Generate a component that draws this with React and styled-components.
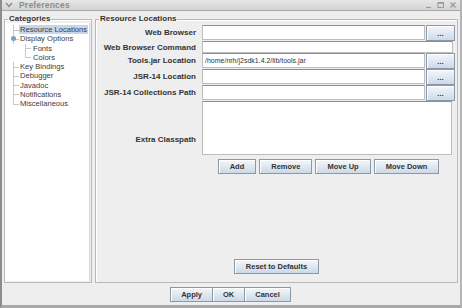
import { createGlobalStyle } from "styled-components";
import styled from "styled-components";

const GlobalStyle = createGlobalStyle`
  html, body {
    margin: 0;
    padding: 0;
    background: #dcdcdc;
  }
  * {
    box-sizing: border-box;
  }
`;

const categories = [
  { name: "Resource Locations", level: 0, selected: true },
  { name: "Display Options", level: 0, expanded: true },
  { name: "Fonts", level: 1 },
  { name: "Colors", level: 1, last: true },
  { name: "Key Bindings", level: 0 },
  { name: "Debugger", level: 0 },
  { name: "Javadoc", level: 0 },
  { name: "Notifications", level: 0 },
  { name: "Miscellaneous", level: 0, last: true },
];

const fields = [
  { label: "Web Browser", value: "", browse: true },
  { label: "Web Browser Command", value: "", browse: false },
  { label: "Tools.jar Location", value: "/home/nrh/j2sdk1.4.2/lib/tools.jar", browse: true },
  { label: "JSR-14 Location", value: "", browse: true },
  { label: "JSR-14 Collections Path", value: "", browse: true },
];

export default function App() {
  return (
    <>
      <GlobalStyle />
      <Window>
        <TitleBar>
          <TitleLeft>
            <svg width="8" height="6" viewBox="0 0 8 6">
              <path d="M1 1 L4 4.5 L7 1" stroke="#8a8a8a" strokeWidth="1.4" fill="none" />
            </svg>
            <span>Preferences</span>
          </TitleLeft>
          <TitleControls>
            <svg width="34" height="8" viewBox="0 0 34 8">
              <path d="M2 6.5 H7" stroke="#9a9a9a" strokeWidth="1.2" />
              <rect x="14" y="1.5" width="5.5" height="5" stroke="#9a9a9a" strokeWidth="1" fill="none" />
              <path d="M14 2 H19.5" stroke="#9a9a9a" strokeWidth="1.5" />
              <path d="M26.5 1.5 L31.5 6.5 M31.5 1.5 L26.5 6.5" stroke="#9a9a9a" strokeWidth="1.4" />
            </svg>
          </TitleControls>
        </TitleBar>
        <Body>
          <Panels>
            <Group $width="88px">
              <Legend>Categories</Legend>
              <Tree>
                {categories.map((c) => (
                  <TreeRow key={c.name} $level={c.level} $last={c.last}>
                    {c.expanded && <Knob />}
                    <TreeLabel $selected={c.selected}>{c.name}</TreeLabel>
                  </TreeRow>
                ))}
              </Tree>
            </Group>
            <Group $flex>
              <Legend>Resource Locations</Legend>
              <Form>
                {fields.map((f) => (
                  <FieldRow key={f.label} $browse={f.browse}>
                    <Label>{f.label}</Label>
                    <TextField $wide={!f.browse}>{f.value}</TextField>
                    {f.browse && <Button $small>...</Button>}
                  </FieldRow>
                ))}
                <ClasspathLabel>Extra Classpath</ClasspathLabel>
                <TextArea />
                <ListButtons>
                  <Button>Add</Button>
                  <Button>Remove</Button>
                  <Button>Move Up</Button>
                  <Button>Move Down</Button>
                </ListButtons>
              </Form>
              <ResetRow>
                <Button>Reset to Defaults</Button>
              </ResetRow>
            </Group>
          </Panels>
          <Footer>
            <Button $joined>Apply</Button>
            <Button $joined>OK</Button>
            <Button $joined>Cancel</Button>
          </Footer>
        </Body>
      </Window>
    </>
  );
}

const Window = styled.div`
  width: 462px;
  height: 308px;
  display: flex;
  flex-direction: column;
  background: #eeeeee;
  border-left: 2px solid #8c8c8c;
  border-right: 2px solid #b4b4b4;
  border-bottom: 3px solid #a8a8a8;
  font-family: "Liberation Sans", Arial, sans-serif;
  color: #333333;
`;

const TitleBar = styled.div`
  height: 11px;
  display: flex;
  align-items: center;
  justify-content: space-between;
  padding: 0 2px 0 3px;
  background: linear-gradient(#e6e6e6, #d4d4d4);
  border-bottom: 1px solid #a9a9a9;
`;

const TitleLeft = styled.div`
  display: flex;
  align-items: center;
  gap: 6px;
  font-size: 8.5px;
  font-weight: bold;
  color: #8d8d8d;
  letter-spacing: 0.2px;
`;

const TitleControls = styled.div`
  display: flex;
  align-items: center;
`;

const Body = styled.div`
  flex: 1;
  display: flex;
  flex-direction: column;
  padding: 4px 2px 0 2px;
`;

const Panels = styled.div`
  flex: 1;
  display: flex;
  gap: 3px;
`;

const Group = styled.fieldset`
  margin: 0;
  padding: 0 1px 1px 1px;
  width: ${(p) => p.$width || "auto"};
  flex: ${(p) => (p.$flex ? 1 : "none")};
  display: flex;
  flex-direction: column;
  border: 1px solid #b9b9b9;
  box-shadow: inset 1px 1px 0 #ffffff;
  min-width: 0;
`;

const Legend = styled.legend`
  padding: 0 1px;
  margin-left: 2px;
  font-size: 8px;
  font-weight: bold;
  color: #333333;
  line-height: 8px;
`;

const Tree = styled.div`
  flex: 1;
  background: #ffffff;
  padding: 2px 0 0 0;
  border-right: 1px solid #d8d8d8;
`;

const TreeRow = styled.div`
  position: relative;
  height: 9.25px;
  display: flex;
  align-items: center;
  padding-left: ${(p) => (p.$level ? 26 : 13)}px;
  font-size: 7.6px;
  white-space: nowrap;
  &::before {
    content: "";
    position: absolute;
    left: ${(p) => (p.$level ? 19 : 7)}px;
    top: 0;
    height: ${(p) => (p.$last ? "50%" : "100%")};
    border-left: 1px solid #c8c8c8;
  }
  &::after {
    content: "";
    position: absolute;
    left: ${(p) => (p.$level ? 19 : 7)}px;
    top: 50%;
    width: 6px;
    border-top: 1px solid #c8c8c8;
  }
`;

const Knob = styled.span`
  position: absolute;
  left: 5px;
  top: 2px;
  width: 5px;
  height: 5px;
  border-radius: 50%;
  background: #7e9ec2;
  z-index: 1;
`;

const TreeLabel = styled.span`
  padding: 0 1px;
  line-height: 9px;
  color: #3c3c3c;
  background: ${(p) => (p.$selected ? "#c4d6ea" : "transparent")};
`;

const Form = styled.div`
  display: grid;
  grid-template-columns: 99px 1fr 29px;
  column-gap: 6px;
  padding: 2px 1px 0 0;
`;

const FieldRow = styled.div`
  display: contents;
  & > * {
    height: ${(p) => (p.$browse ? "15px" : "12px")};
  }
`;

const Label = styled.div`
  display: flex;
  align-items: center;
  justify-content: flex-end;
  font-size: 8px;
  font-weight: bold;
  color: #333333;
  white-space: nowrap;
`;

const TextField = styled.div`
  grid-column: ${(p) => (p.$wide ? "2 / span 2" : "2")};
  margin-right: ${(p) => (p.$wide ? "2px" : "-5px")};
  background: #ffffff;
  border: 1px solid #bdbdbd;
  border-top-color: #8e8e8e;
  font-size: 7px;
  display: flex;
  align-items: center;
  padding-left: 2px;
  color: #333333;
  white-space: nowrap;
  overflow: hidden;
`;

const ClasspathLabel = styled(Label)`
  grid-row: span 2;
  padding-top: 4px;
`;

const TextArea = styled.div`
  grid-column: 2 / span 2;
  height: 54px;
  margin-right: 3px;
  background: #ffffff;
  border: 1px solid #bdbdbd;
  border-top-color: #8e8e8e;
`;

const ListButtons = styled.div`
  grid-column: 2 / span 2;
  display: flex;
  justify-content: center;
  gap: 3px;
  padding: 4px 0 0 0;
`;

const Button = styled.div`
  display: flex;
  align-items: center;
  justify-content: center;
  height: ${(p) => (p.$small ? "16px" : "15px")};
  padding: 0 ${(p) => (p.$small ? "0" : p.$joined ? "10px" : "11px")};
  font-size: 7.5px;
  font-weight: bold;
  color: #333333;
  background: linear-gradient(#f4f7fa, #ccd9e7);
  border: 1px solid #8a98a8;
  box-shadow: inset 1px 1px 0 #ffffff;
  white-space: nowrap;
  margin-left: ${(p) => (p.$joined ? "-1px" : "0")};
`;

const ResetRow = styled.div`
  margin-top: auto;
  display: flex;
  justify-content: center;
  padding-bottom: 7px;
`;

const Footer = styled.div`
  display: flex;
  justify-content: center;
  padding: 4px 0 3px 0;
`;
